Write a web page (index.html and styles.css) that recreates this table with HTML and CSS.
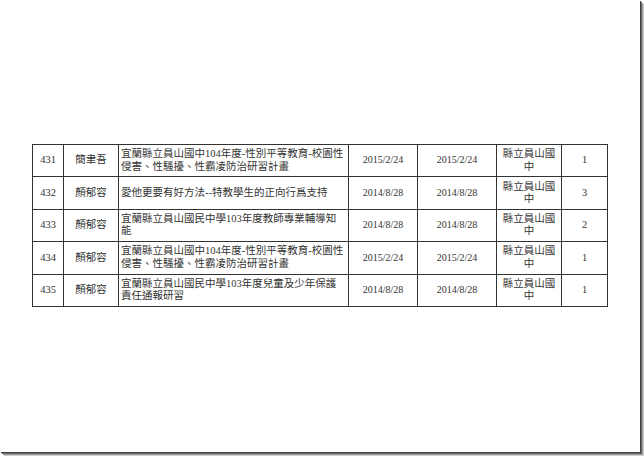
FILE: index.html
```html
<!DOCTYPE html>
<html lang="zh-Hant">
<head>
<meta charset="utf-8">
<title>研習紀錄</title>
<link rel="stylesheet" href="styles.css">
</head>
<body>
<div class="page">
  <table class="records">
    <colgroup>
      <col class="c-no">
      <col class="c-name">
      <col class="c-title">
      <col class="c-date">
      <col class="c-date2">
      <col class="c-school">
      <col class="c-count">
    </colgroup>
    <tbody>
      <tr>
        <td class="no">431</td>
        <td class="name">簡聿吾</td>
        <td class="title">宜蘭縣立員山國中104年度-性別平等教育-校園性<br>侵害、性騷擾、性霸凌防治研習計畫</td>
        <td class="date">2015/2/24</td>
        <td class="date">2015/2/24</td>
        <td class="school">縣立員山國<br>中</td>
        <td class="count">1</td>
      </tr>
      <tr>
        <td class="no">432</td>
        <td class="name">顏郁容</td>
        <td class="title">愛他更要有好方法--特教學生的正向行爲支持</td>
        <td class="date">2014/8/28</td>
        <td class="date">2014/8/28</td>
        <td class="school">縣立員山國<br>中</td>
        <td class="count">3</td>
      </tr>
      <tr>
        <td class="no">433</td>
        <td class="name">顏郁容</td>
        <td class="title">宜蘭縣立員山國民中學103年度教師專業輔導知<br>能</td>
        <td class="date">2014/8/28</td>
        <td class="date">2014/8/28</td>
        <td class="school">縣立員山國<br>中</td>
        <td class="count">2</td>
      </tr>
      <tr>
        <td class="no">434</td>
        <td class="name">顏郁容</td>
        <td class="title">宜蘭縣立員山國中104年度-性別平等教育-校園性<br>侵害、性騷擾、性霸凌防治研習計畫</td>
        <td class="date">2015/2/24</td>
        <td class="date">2015/2/24</td>
        <td class="school">縣立員山國<br>中</td>
        <td class="count">1</td>
      </tr>
      <tr>
        <td class="no">435</td>
        <td class="name">顏郁容</td>
        <td class="title">宜蘭縣立員山國民中學103年度兒童及少年保護<br>責任通報研習</td>
        <td class="date">2014/8/28</td>
        <td class="date">2014/8/28</td>
        <td class="school">縣立員山國<br>中</td>
        <td class="count">1</td>
      </tr>
    </tbody>
  </table>
</div>
</body>
</html>
```

FILE: styles.css
```css
html, body {
  margin: 0;
  padding: 0;
  background: #ffffff;
}

body {
  width: 644px;
  height: 456px;
  overflow: hidden;
}

.page {
  box-sizing: border-box;
  width: 640px;
  height: 452px;
  background: #ffffff;
  padding: 144px 0 0 32px;
  box-shadow: 1px 1px 0 #404040, 2px 2px 0 #6a6a6a, 3px 3px 0 #9a9a9a, 4px 4px 0 #d0d0d0;
}

.records {
  border-collapse: collapse;
  table-layout: fixed;
  width: 575px;
  font-family: "Liberation Serif", "Noto Sans CJK TC", serif;
  font-size: 10.5px;
  font-weight: 400;
  line-height: 12.5px;
  color: #333333;
}

.c-no { width: 31px; }
.c-name { width: 55px; }
.c-title { width: 230px; }
.c-date { width: 69px; }
.c-date2 { width: 79px; }
.c-school { width: 65px; }
.c-count { width: 46px; }

.records td {
  border: 1px solid #333333;
  height: 31.4px;
  padding: 0;
  vertical-align: middle;
  text-align: center;
  white-space: nowrap;
  overflow: hidden;
}

.records td.title {
  text-align: left;
  padding-left: 2px;
}

.records td.date {
  font-size: 10px;
}
```
